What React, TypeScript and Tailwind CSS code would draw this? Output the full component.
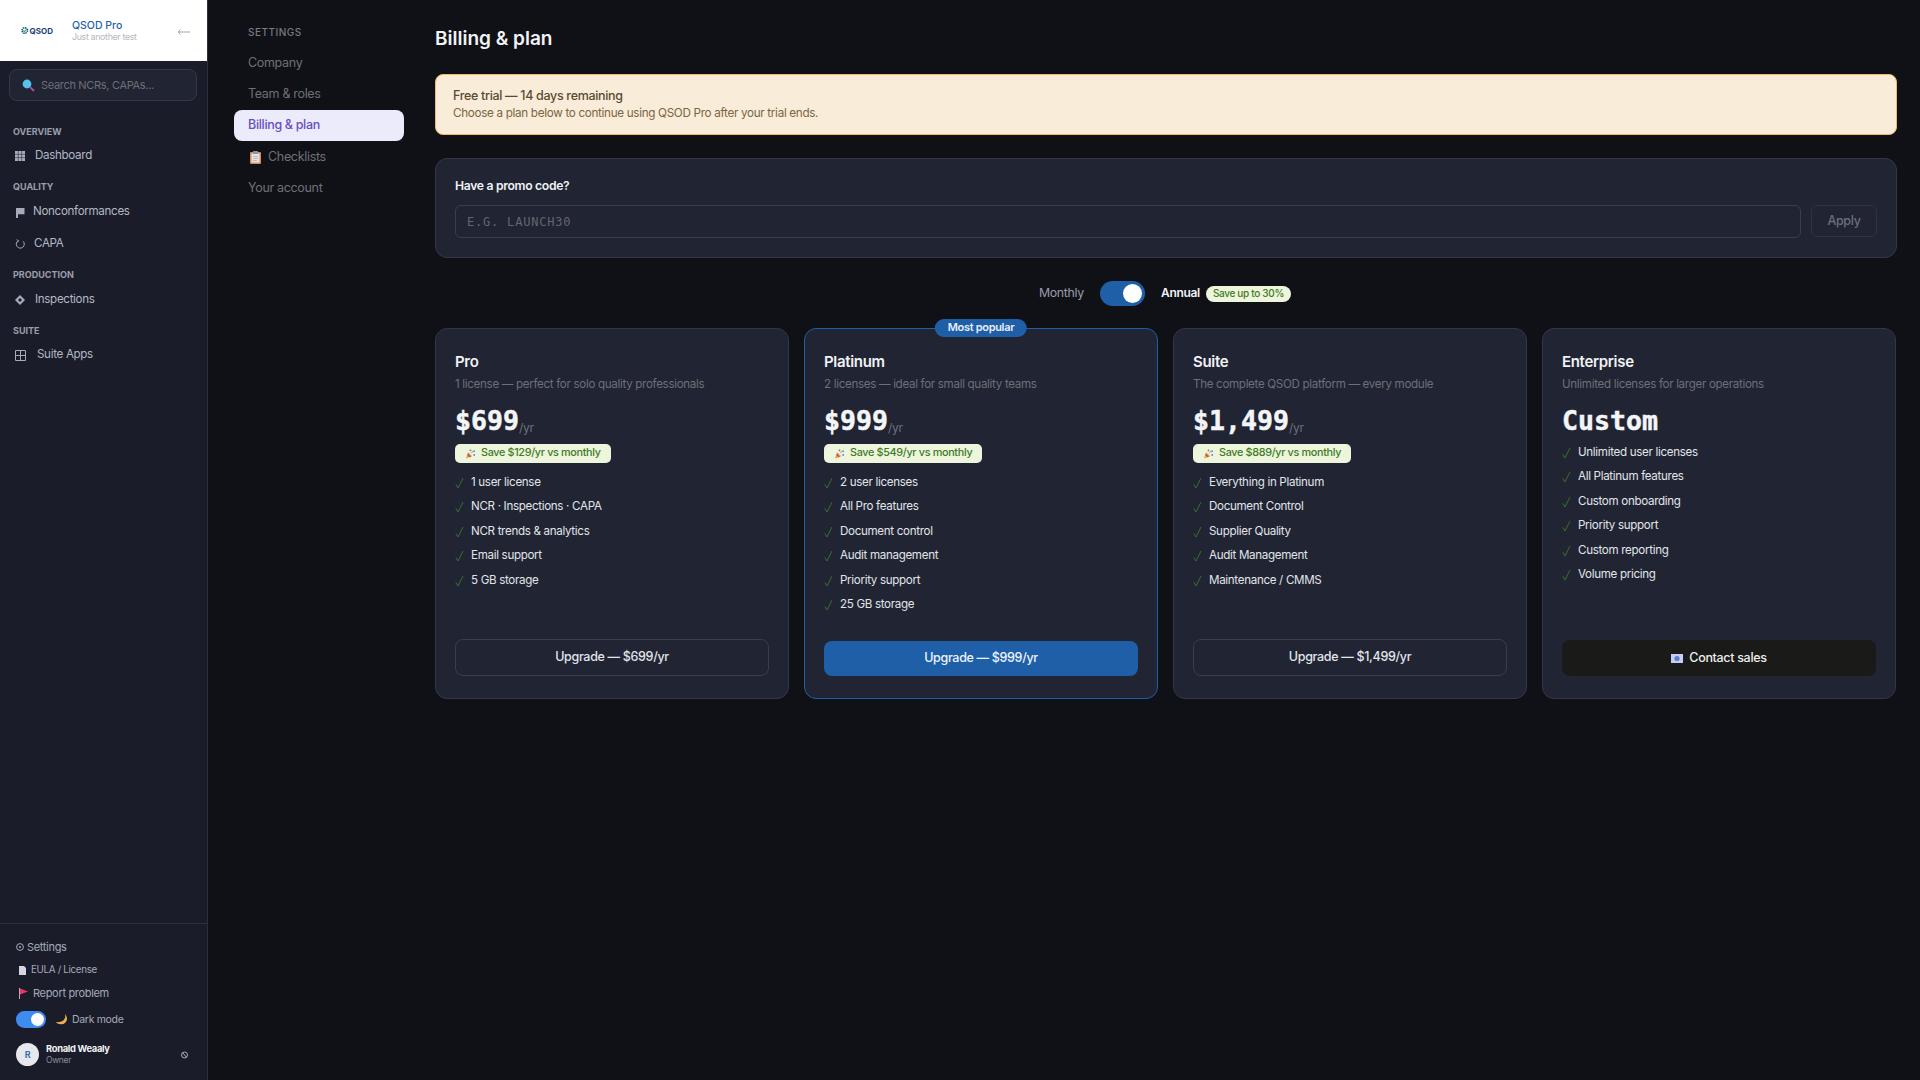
const plans = [
  {
    name: "Pro",
    desc: "1 license — perfect for solo quality professionals",
    price: "$699",
    save: "Save $129/yr vs monthly",
    features: ["1 user license", "NCR · Inspections · CAPA", "NCR trends & analytics", "Email support", "5 GB storage"],
    cta: "Upgrade — $699/yr",
  },
  {
    name: "Platinum",
    desc: "2 licenses — ideal for small quality teams",
    price: "$999",
    save: "Save $549/yr vs monthly",
    features: ["2 user licenses", "All Pro features", "Document control", "Audit management", "Priority support", "25 GB storage"],
    cta: "Upgrade — $999/yr",
    popular: true,
  },
  {
    name: "Suite",
    desc: "The complete QSOD platform — every module",
    price: "$1,499",
    save: "Save $889/yr vs monthly",
    features: ["Everything in Platinum", "Document Control", "Supplier Quality", "Audit Management", "Maintenance / CMMS"],
    cta: "Upgrade — $1,499/yr",
  },
  {
    name: "Enterprise",
    desc: "Unlimited licenses for larger operations",
    price: "Custom",
    features: ["Unlimited user licenses", "All Platinum features", "Custom onboarding", "Priority support", "Custom reporting", "Volume pricing"],
    cta: "Contact sales",
  },
];

const Party = () => (
  <svg width="11" height="12" viewBox="0 0 12 12" className="shrink-0">
    <path d="M1 11 3.5 4 8 8.5z" fill="#e8a33d" />
    <path d="M3 5.5 6.5 9 5 9.6 2.5 7z" fill="#c2417c" />
    <circle cx="6" cy="2" r="1" fill="#e0457b" />
    <circle cx="10" cy="3" r="1" fill="#4aa3e0" />
    <circle cx="10" cy="7" r="1" fill="#8b5cf6" />
    <path d="M7 5 9 2.5" stroke="#5fb85f" strokeWidth="1" />
  </svg>
);

const Check = () => (
  <svg width="9" height="12" viewBox="0 0 9 12" fill="none" className="shrink-0 mt-[3px]">
    <path d="M.8 7.4 3 11 8 1" stroke="#3a6f2b" strokeWidth="1" />
  </svg>
);

const NavItem = ({ icon, label, gap }: { icon: React.ReactNode; label: string; gap: string }) => (
  <div className={`h-8 flex items-center pl-[14px] text-[11.6px] text-[#b3b7c4] ${gap}`}>
    <span className="w-[12px] flex justify-center">{icon}</span>
    <span>{label}</span>
  </div>
);

const SectionLabel = ({ children, tight }: { children: string; tight?: boolean }) => (
  <div className={`mt-[9px] h-3 pl-[13px] text-[9px] leading-3 font-bold tracking-normal text-[#9a9eac] ${tight ? "mb-[2px]" : "mb-[3px]"}`}>
    {children}
  </div>
);

const PlanCard = ({ plan }: { plan: (typeof plans)[number] }) => {
  const custom = plan.price === "Custom";
  return (
    <div
      className={`relative flex flex-col rounded-xl border bg-[#202433] px-[19px] pt-[23px] pb-[22px] ${
        plan.popular ? "border-[#1f5fa8]" : "border-[#32364a]"
      }`}
    >
      {plan.popular && (
        <div className="absolute -top-[10px] left-1/2 -translate-x-1/2 h-[18px] px-[13px] rounded-full bg-[#1f5fa8] text-[11px] leading-[17px] font-semibold text-[#e8eefa]">
          Most popular
        </div>
      )}
      <div className="text-[15px] leading-5 font-semibold text-[#f1f2f5]">{plan.name}</div>
      <div className="mt-[3px] text-[11.6px] leading-[18px] text-[#6d7078]">{plan.desc}</div>
      <div className="mt-[8px] h-[40px] flex items-end">
        <span className="font-['DejaVu_Sans_Mono',monospace] text-[26.6px] leading-[40px] font-bold tracking-normal text-[#f4f5f7] [-webkit-text-stroke:0.5px_#f4f5f7]">{plan.price}</span>
        {!custom && <span className="mb-[5px] text-[12px] leading-4 text-[#6d7078]">/yr</span>}
      </div>
      {plan.save && (
        <div className="mt-[3px] self-start h-[19px] flex items-center gap-[5px] rounded-[5px] bg-[#edf5dc] px-[10px] text-[10.8px] font-medium text-[#3f7a24]">
          <Party />
          <span>{plan.save}</span>
        </div>
      )}
      <ul className={`flex flex-col ${custom ? "-mt-[1px]" : "mt-[7px]"}`}>
        {plan.features.map((f) => (
          <li key={f} className="h-[24.4px] flex items-start gap-[7px] text-[11.6px] leading-[24px] text-[#e2e4ea]">
            <span className="pt-[4px] flex"><Check /></span>
            <span>{f}</span>
          </li>
        ))}
      </ul>
      <div className="mt-auto">
        {custom ? (
          <div className="h-[36px] flex items-center justify-center gap-[6px] rounded-lg bg-[#1a1a18] text-[12.5px] font-medium text-[#eceded]">
            <svg width="12" height="9" viewBox="0 0 12 9"><rect width="12" height="9" fill="#c9cdf2" /><circle cx="6" cy="4.5" r="2.6" fill="#5a7fd0" /></svg>
            Contact sales
          </div>
        ) : plan.popular ? (
          <div className="h-[35px] flex items-center justify-center rounded-lg bg-[#1f5fa8] text-[12.5px] font-medium text-[#eef3fb]">{plan.cta}</div>
        ) : (
          <div className="h-[37px] flex items-center justify-center rounded-lg border border-[#393d50] text-[12.5px] font-medium text-[#e2e4ea]">{plan.cta}</div>
        )}
      </div>
    </div>
  );
};

export default function App() {
  return (
    <div className="h-screen flex overflow-hidden bg-[#0f1117] tracking-[-0.02em] font-['Inter','Noto_Sans',sans-serif]">
      {/* sidebar */}
      <aside className="w-[208px] shrink-0 flex flex-col bg-[#1a1d29] border-r border-[#2c2f3c]">
        <div className="h-[61px] bg-white flex items-center pl-[21px] pr-[17px]">
          <div className="w-[32px] flex items-center gap-[1px]">
            <svg width="11" height="11" viewBox="0 0 10 10">
              <circle cx="5" cy="5" r="3.6" fill="none" stroke="#1e5c8a" strokeWidth="2" strokeDasharray="2 .8" />
              <path d="M3 5 4.6 6.6 7.4 3" fill="none" stroke="#3aa54a" strokeWidth="1.4" />
            </svg>
            <span className="text-[8px] leading-none font-bold tracking-normal text-[#1d3f7a]">QSOD</span>
          </div>
          <div className="ml-[19px] flex-1">
            <div className="text-[10.5px] leading-[13px] font-medium tracking-normal text-[#1f5fa8]">QSOD Pro</div>
            <div className="text-[8.8px] leading-[10px] text-[#b5b8c0]">Just another test</div>
          </div>
          <svg width="13" height="6" viewBox="0 0 13 6" fill="none" className="mt-[2px]">
            <path d="M13 3H1M3.5.6 1 3l2.5 2.4" stroke="#a3a7b0" />
          </svg>
        </div>

        <div className="ml-[9px] mr-[10px] mt-[8px] h-[32px] flex items-center gap-[6px] rounded-lg border border-[#343849] bg-[#202433] pl-[12px] pt-[1px] text-[11px] text-[#6d7078]">
          <svg width="13" height="13" viewBox="0 0 13 13">
            <path d="M8 8l4 4" stroke="#a050a8" strokeWidth="2" />
            <circle cx="5" cy="5" r="4.4" fill="#55c3ee" />
          </svg>
          Search NCRs, CAPAs...
        </div>

        <div className="mt-[16px]">
          <SectionLabel tight>OVERVIEW</SectionLabel>
          <NavItem
            gap="gap-[9px]"
            label="Dashboard"
            icon={
              <svg width="10" height="10" viewBox="0 0 10 10">
                <rect width="10" height="10" fill="#a6aabb" />
                <path d="M0 3.3h10M0 6.6h10M3.3 0v10M6.6 0v10" stroke="#1a1d29" strokeWidth=".5" />
              </svg>
            }
          />
          <SectionLabel>QUALITY</SectionLabel>
          <NavItem
            gap="gap-[7px]"
            label="Nonconformances"
            icon={
              <svg width="9" height="11" viewBox="0 0 9 11">
                <path d="M0 1h8.5v6.2H2V11H0z" fill="#a6aabb" />
              </svg>
            }
          />
          <NavItem
            gap="gap-[8px]"
            label="CAPA"
            icon={
              <svg width="10" height="10" viewBox="0 0 10 10" fill="none">
                <path d="M3.4 1.6A4 4 0 1 0 8.2 2.4" stroke="#a6aabb" strokeWidth="1" />
                <path d="M1.6 .6l2 1-1 1.8" stroke="#a6aabb" strokeWidth=".8" />
              </svg>
            }
          />
          <SectionLabel>PRODUCTION</SectionLabel>
          <NavItem
            gap="gap-[9px]"
            label="Inspections"
            icon={
              <svg width="10" height="10" viewBox="0 0 10 10">
                <path d="M5 0l5 5-5 5-5-5z" fill="#a6aabb" />
                <path d="M5 3l2 2-2 2-2-2z" fill="#1a1d29" />
              </svg>
            }
          />
          <SectionLabel tight>SUITE</SectionLabel>
          <NavItem
            gap="gap-[11px]"
            label="Suite Apps"
            icon={
              <svg width="11" height="11" viewBox="0 0 11 11" fill="none">
                <path d="M.5.5h10v10H.5zM.5 5.5h10M5.5.5v10" stroke="#a6aabb" />
              </svg>
            }
          />
        </div>

        <div className="mt-auto border-t border-[#2c2f3c] h-[157px] pl-[16px] pr-[18px] text-[#a6aabb]">
          <div className="mt-[13px] h-[20px] flex items-center gap-[3px] text-[11px]">
            <svg width="8" height="8" viewBox="0 0 8 8" fill="none"><circle cx="4" cy="4" r="3.4" stroke="#a6aabb" /><circle cx="4" cy="4" r="1" fill="#a6aabb" /></svg>
            Settings
          </div>
          <div className="mt-[3px] h-[20px] flex items-center gap-[5px] pl-[3px] text-[9.8px]">
            <svg width="7" height="9" viewBox="0 0 7 9"><path d="M0 0h5l2 2v7H0z" fill="#d6d3e4" /></svg>
            EULA / License
          </div>
          <div className="mt-[3px] h-[20px] flex items-center gap-[5px] pl-[3px] text-[11px]">
            <svg width="9" height="11" viewBox="0 0 9 11"><path d="M0 0h1v11H0z" fill="#c9a8b0" /><path d="M1 .5 9 3.4 1 6.4z" fill="#e8386a" /></svg>
            Report problem
          </div>
          <div className="mt-[8px] h-[17px] flex items-center">
            <div className="w-[30px] h-[17px] rounded-full bg-[#3f8cf0] flex justify-end items-center pr-[2px]">
              <div className="w-[13px] h-[13px] rounded-full bg-white" />
            </div>
            <svg width="11" height="11" viewBox="0 0 11 11" className="ml-[10px]"><path d="M9 0c1 4-1 9-9 8 2 3 10 4 11-3C11 3 10 1 9 0z" fill="#eeb04a" /></svg>
            <span className="ml-[5px] text-[10.5px]">Dark mode</span>
          </div>
          <div className="mt-[15px] flex items-center">
            <div className="w-[23px] h-[23px] rounded-full bg-[#e6e8ee] flex items-center justify-center text-[9px] font-bold text-[#3f6fa8]">R</div>
            <div className="ml-[7px] flex-1">
              <div className="text-[9.4px] leading-[12px] font-bold text-[#f0f1f4]">Ronald Weaaly</div>
              <div className="text-[8.5px] leading-[11px] text-[#8a8e9c]">Owner</div>
            </div>
            <svg width="7" height="8" viewBox="0 0 7 8" fill="none" className="mr-[1px]"><circle cx="3.5" cy="4" r="3" stroke="#a6aabb" /><path d="M1.5 1.5l4 5" stroke="#a6aabb" /></svg>
          </div>
        </div>
      </aside>

      {/* settings nav */}
      <nav className="w-[227px] shrink-0 pl-[26px] pr-[31px] pt-[26px]">
        <div className="pl-[14px] h-3 text-[10px] leading-3 font-medium tracking-[0.05em] text-[#777a82]">SETTINGS</div>
        <div className="mt-[10px] flex flex-col text-[12.5px] text-[#6e7078]">
          <div className="h-[31px] flex items-center pl-[14px]">Company</div>
          <div className="h-[31px] flex items-center pl-[14px]">Team &amp; roles</div>
          <div className="h-[31px] flex items-center pl-[14px] rounded-lg bg-[#ecebfb] font-medium text-[#6650c0]">Billing &amp; plan</div>
          <div className="h-[32px] flex items-center gap-[7px] pl-[16px]">
            <svg width="11" height="13" viewBox="0 0 11 13">
              <rect y="1" width="11" height="12" rx="1" fill="#d98a4e" />
              <rect x="1.5" y="2.5" width="8" height="9" fill="#e6e4ea" />
              <rect x="3" width="5" height="3" rx=".5" fill="#8f93a0" />
              <path d="M3 5.5h5M3 7.5h5M3 9.5h4" stroke="#a0a3ae" strokeWidth=".7" />
            </svg>
            Checklists
          </div>
          <div className="h-[31px] flex items-center pl-[14px]">Your account</div>
        </div>
      </nav>

      {/* main */}
      <main className="flex-1 pr-[23px] pt-[25px]">
        <h1 className="text-[19px] leading-[28px] font-semibold tracking-normal text-[#f2f3f6]">Billing &amp; plan</h1>
        <div className="mt-[21px] h-[61px] rounded-lg border border-[#f4b860] bg-[#f9ecd8] pl-[17px] pt-[11px]">
          <div className="text-[12.5px] leading-[20px] font-medium text-[#5a4a32]">Free trial — 14 days remaining</div>
          <div className="text-[11.7px] leading-[14px] text-[#7a6644]">Choose a plan below to continue using QSOD Pro after your trial ends.</div>
        </div>
        <div className="mt-[23px] h-[100px] rounded-xl border border-[#32364a] bg-[#202433] px-[19px] pt-[19px]">
          <div className="text-[12.2px] leading-[16px] font-semibold text-[#f1f2f5]">Have a promo code?</div>
          <div className="mt-[11px] flex gap-[10px]">
            <div className="flex-1 h-[33px] flex items-center rounded-md border border-[#393d50] pl-[11px] pt-[1px] font-['DejaVu_Sans_Mono',monospace] text-[12px] tracking-[0.8px] text-[#63666f]">E.G. LAUNCH30</div>
            <div className="w-[66px] h-[32px] flex items-center justify-center rounded-md border border-[#2e3244] text-[12.5px] font-medium text-[#6d7078]">Apply</div>
          </div>
        </div>
        <div className="mt-[23px] h-[25px] flex items-center pl-[604px] text-[12px]">
          <span className="w-[46px] -mt-[1px] text-[12.3px] text-[#9a9eac]">Monthly</span>
          <div className="ml-[15px] w-[45px] h-[25px] rounded-full bg-[#1f5fa8] flex justify-end items-center pr-[3px]">
            <div className="w-[19px] h-[19px] rounded-full bg-white" />
          </div>
          <span className="ml-[16px] -mt-[1px] font-semibold text-[#f1f2f5]">Annual</span>
          <span className="ml-[6px] h-[16px] px-[7px] flex items-center rounded-full bg-[#edf5dc] text-[10px] font-medium text-[#3f7a24]">Save up to 30%</span>
        </div>
        <div className="mt-[22px] w-[1461px] h-[371px] grid grid-cols-4 gap-[15px]">
          {plans.map((p) => (
            <PlanCard key={p.name} plan={p} />
          ))}
        </div>
      </main>
    </div>
  );
}
